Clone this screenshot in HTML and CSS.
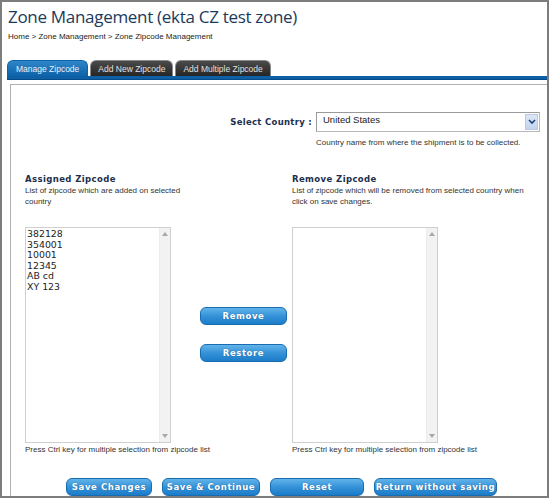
FILE: index.html
```
<!DOCTYPE html>
<html>
<head>
<meta charset="utf-8">
<link rel="stylesheet" href="styles.css">
</head>
<body>
<div class="frame">
  <h1 class="title">Zone Management (ekta CZ test zone)</h1>
  <div class="crumbs">Home &gt; Zone Management &gt; Zone Zipcode Management</div>
  <div class="tabs">
    <div class="tab active">Manage Zipcode</div>
    <div class="tab">Add New Zipcode</div>
    <div class="tab">Add Multiple Zipcode</div>
  </div>
  <div class="tabbar"></div>
  <div class="panel">
    <div class="country-row">
      <label class="country-label">Select Country :</label>
      <div class="dropdown">
        <span class="dropdown-text">United States</span>
        <span class="dropdown-arrow">
          <svg width="8" height="6" viewBox="0 0 8 6"><path d="M1 1 L4 4 L7 1" fill="none" stroke="#1f3f7a" stroke-width="1.6"/></svg>
        </span>
      </div>
    </div>
    <div class="country-help">Country name from where the shipment is to be collected.</div>

    <div class="columns">
      <div class="col-head left-head">
        <div class="heading">Assigned Zipcode</div>
        <div class="desc narrow">List of zipcode which are added on selected country</div>
      </div>
      <div class="col-head right-head">
        <div class="heading">Remove Zipcode</div>
        <div class="desc">List of zipcode which will be removed from selected country when click on save changes.</div>
      </div>

      <div class="listbox">
        <div class="list-items">
          <div>382128</div>
          <div>354001</div>
          <div>10001</div>
          <div>12345</div>
          <div>AB cd</div>
          <div>XY 123</div>
        </div>
        <div class="scroll">
          <span class="arr up"></span>
          <span class="arr down"></span>
        </div>
      </div>
      <div class="mid-buttons">
        <button class="btn mid">Remove</button>
        <button class="btn mid">Restore</button>
      </div>
      <div class="listbox">
        <div class="list-items"></div>
        <div class="scroll">
          <span class="arr up"></span>
          <span class="arr down"></span>
        </div>
      </div>

      <div class="note">Press Ctrl key for multiple selection from zipcode list</div>
      <div class="note right-note">Press Ctrl key for multiple selection from zipcode list</div>
    </div>

    <div class="actions">
      <button class="btn w-save">Save Changes</button>
      <button class="btn w-cont">Save &amp; Continue</button>
      <button class="btn w-reset">Reset</button>
      <button class="btn w-return">Return without saving</button>
    </div>
  </div>
</div>
</body>
</html>
```
FILE: styles.css
```
* { box-sizing: border-box; }
html, body { margin: 0; padding: 0; background: #fff; }
body { width: 549px; height: 500px; overflow: hidden; }

.frame {
  width: 549px;
  height: 498px;
  border: 2px solid #7d7d7d;
  overflow: hidden;
  background: #fff;
  font-family: "Liberation Sans", Arial, sans-serif;
}

.title {
  margin: 0;
  padding: 3px 0 0 6px;
  height: 28px;
  font-family: "Open Sans", sans-serif;
  font-weight: 400;
  font-size: 17px;
  line-height: 24px;
  letter-spacing: -0.3px;
  color: #1a3a5c;
}

.crumbs {
  padding-left: 6px;
  font-size: 8px;
  line-height: 12px;
  height: 30px;
  padding-top: 1px;
  color: #222;
}

.tabs {
  display: flex;
  gap: 2px;
  margin-left: 5px;
  height: 16px;
}
.tab {
  height: 16px;
  padding: 0 7px;
  font-size: 8.5px;
  line-height: 17px;
  color: #e0e0e0;
  background: linear-gradient(#4a4a4a, #262626);
  border: 1px solid #8a8a8a;
  border-bottom: none;
  border-radius: 6px 6px 0 0;
}
.tab.active {
  padding: 0 8px;
  background: linear-gradient(#2f86c8, #0e62a8);
  border-color: #0e62a8;
  color: #e8f0f8;
}

.tabbar {
  margin-left: 5px;
  height: 4px;
  background: #0d5fa6;
  border-bottom: 1px solid #084a85;
}

.panel {
  margin: 4px 0 0 8px;
  border-top: 1px solid #b0b0b0;
  border-left: 1px solid #b0b0b0;
  padding: 27px 0 0 14px;
  height: 420px;
}

.country-row {
  display: flex;
  align-items: center;
  margin-left: -14px;
  gap: 4px;
}
.country-label {
  width: 301px;
  text-align: right;
  font-family: "DejaVu Sans", Verdana, sans-serif;
  font-weight: bold;
  font-size: 8.5px;
  color: #1c2f4d;
  letter-spacing: 0.3px;
}
.dropdown {
  width: 224px;
  height: 20px;
  display: flex;
  align-items: stretch;
  border: 1px solid #b8b8b8;
  border-top-color: #9a9a9a;
  border-left-color: #9a9a9a;
  background: #fff;
}
.dropdown-text {
  flex: 1;
  padding-left: 6px;
  font-size: 9.5px;
  line-height: 14px;
  color: #222;
}
.dropdown-arrow {
  width: 13px;
  margin: 1px;
  background: linear-gradient(#dce7f7, #c3d4ee);
  border: 1px solid #b9c9e2;
  display: flex;
  align-items: center;
  justify-content: center;
}

.country-help {
  margin: 5px 0 0 291px;
  font-size: 8px;
  line-height: 11px;
  color: #333;
}

.columns {
  margin-top: 25px;
  display: grid;
  grid-template-columns: 175px 92px 1fr;
}
.col-head { height: 54px; }
.left-head { grid-column: 1 / 3; }
.right-head { grid-column: 3; }
.heading {
  font-family: "DejaVu Sans", Verdana, sans-serif;
  font-weight: bold;
  font-size: 8.5px;
  line-height: 12px;
  letter-spacing: 0.4px;
  color: #1c2f4d;
}
.desc {
  font-size: 8px;
  line-height: 11px;
  color: #333;
  width: 240px;
}
.desc.narrow { width: 170px; }

.listbox {
  width: 146px;
  height: 216px;
  border: 1px solid #cfcfcf;
  display: flex;
  background: #fff;
}
.list-items {
  flex: 1;
  padding: 1px 0 0 1px;
  font-family: "DejaVu Sans", Verdana, sans-serif;
  font-size: 9.4px;
  line-height: 10.5px;
  color: #222;
}
.scroll {
  width: 11px;
  background: #f2f2f2;
  border-left: 1px solid #ececec;
  display: flex;
  flex-direction: column;
  justify-content: space-between;
  align-items: center;
  padding: 4px 0;
}
.arr {
  width: 0;
  height: 0;
  border-left: 3px solid transparent;
  border-right: 3px solid transparent;
}
.arr.up { border-bottom: 4px solid #a8a8a8; }
.arr.down { border-top: 4px solid #a8a8a8; }

.mid-buttons {
  display: flex;
  flex-direction: column;
  gap: 19px;
  padding-top: 80px;
}

.btn {
  display: block;
  height: 18px;
  padding: 0;
  border: 1px solid #1a6cb0;
  border-radius: 6px;
  background: linear-gradient(#62b4ea, #3592d8 50%, #1b7cc8);
  color: #fff;
  font-family: "DejaVu Sans", Verdana, sans-serif;
  font-weight: bold;
  font-size: 8.5px;
  letter-spacing: 0.6px;
  line-height: 16px;
  text-align: center;
  text-shadow: 0 0 1px #1d5f98;
}
.btn.mid { width: 87px; }

.note {
  grid-column: 1 / 3;
  margin-top: 1px;
  font-size: 8px;
  line-height: 11px;
  color: #333;
}
.note.right-note { grid-column: 3; }

.actions {
  display: flex;
  gap: 10px;
  margin: 23px 0 0 41px;
}
.w-save { width: 86px; }
.w-cont { width: 98px; }
.w-reset { width: 94px; }
.w-return { width: 123px; }
```
